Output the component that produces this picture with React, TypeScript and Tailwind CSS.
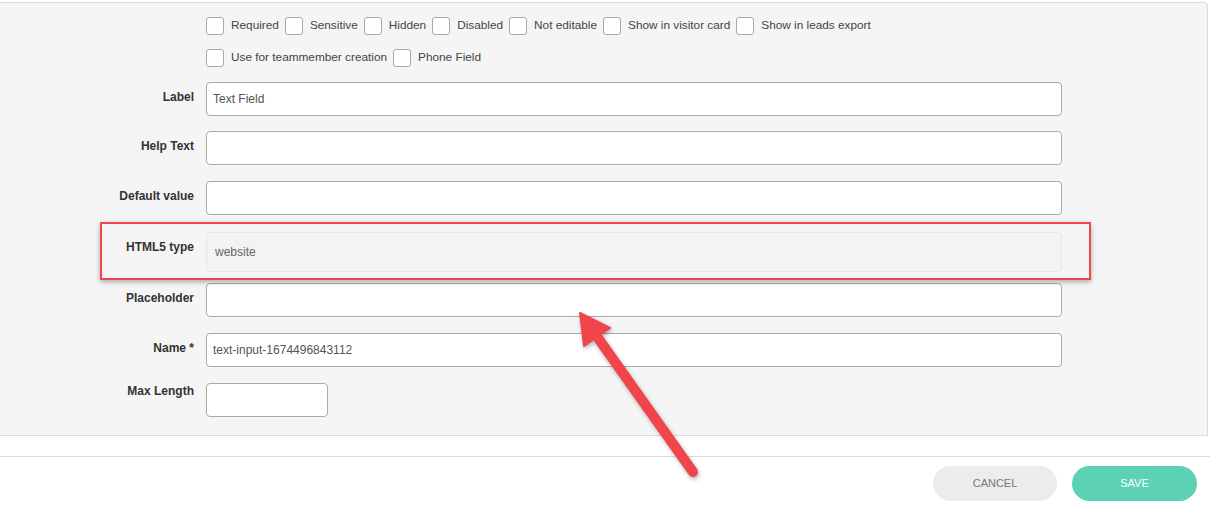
import React from 'react';

const checks1 = ['Required', 'Sensitive', 'Hidden', 'Disabled', 'Not editable', 'Show in visitor card', 'Show in leads export'];
const checks2 = ['Use for teammember creation', 'Phone Field'];

const CheckRow = ({ items }: { items: string[] }) => (
    <div className="flex items-center h-[18px] pl-[206px]">
        {items.map((t, i) => (
            <label key={t} className={`flex items-center ${i > 0 ? 'ml-[6px]' : ''}`}>
                <span className="w-[18px] h-[18px] bg-white border border-[#a9a9a9] rounded-[3px] shrink-0" />
                <span className="ml-[7px] text-[11.8px] text-[#444] leading-[16px] -mt-[2px]">{t}</span>
            </label>
        ))}
    </div>
);

const Row = ({ label, value, className, inputClass, labelClass }: { label: string; value?: string; className?: string; inputClass?: string; labelClass?: string }) => (
    <div className={`flex ${className ?? ''}`}>
        <div className={`w-[194px] text-right text-[12px] font-bold leading-[16px] text-[#333] ${labelClass ?? 'pt-[7px]'}`}>{label}</div>
        <div
            className={`ml-[12px] h-[34px] bg-white border border-[#aaa] rounded-[4px] flex items-center px-[6px] text-[12px] text-[#555] ${inputClass ?? 'w-[856px]'}`}
        >
            {value}
        </div>
    </div>
);

const App = () => {
    return (
        <div className="relative w-[1210px] h-[512px] bg-white font-['Liberation_Sans',Arial,sans-serif] overflow-hidden">
            <div className="mt-[2px] mr-[2px] h-[434px] bg-[#f5f5f5] border-t border-r border-b border-[#dcdcdc] rounded-tr-[4px] pt-[14px]">
                <CheckRow items={checks1} />
                <div className="h-[14px]" />
                <CheckRow items={checks2} />
                <div className="mt-[15px]">
                    <Row label="Label" value="Text Field" className="mb-[15px]" />
                    <Row label="Help Text" className="mb-[16px]" />
                    <Row label="Default value" className="mb-[17px]" />
                    <div className="flex mb-[11px]">
                        <div className="w-[194px] text-right pt-[7px] text-[12px] font-bold leading-[16px] text-[#333]">HTML5 type</div>
                        <div className="ml-[12px] w-[856px] h-[40px] bg-[#f3f3f3] border border-[#e6e6e6] rounded-[4px] flex items-center px-[8px] text-[12px] text-[#666]">
                            website
                        </div>
                    </div>
                    <Row label="Placeholder" className="mb-[16px]" />
                    <Row label="Name *" value="text-input-1674496843112" className="mb-[16px]" />
                    <Row label="Max Length" inputClass="w-[122px]" labelClass="pt-0" />
                </div>
            </div>
            <div className="mt-[20px] border-t border-[#dcdcdc]" />
            <div className="flex justify-end gap-[15px] pr-[13px] pt-[9px]">
                <button className="w-[124px] h-[35px] rounded-full bg-[#ececec] text-[#777] text-[11px]">CANCEL</button>
                <button className="w-[125px] h-[35px] rounded-full bg-[#5dd1b4] text-white text-[11px]">SAVE</button>
            </div>

            {/* annotation overlay */}
            <div className="absolute left-[100px] top-[222px] w-[991px] h-[58px] border-2 border-[#f0454a] shadow-[0_2px_5px_rgba(0,0,0,0.3)] pointer-events-none" />
            <svg className="absolute left-0 top-0 pointer-events-none" width="1210" height="512" style={{ filter: 'drop-shadow(1px 2px 2px rgba(0,0,0,0.3))' }}>
                <line x1="693" y1="472" x2="598" y2="338" stroke="#f0454a" strokeWidth="10" strokeLinecap="round" />
                <polygon points="580,313 610,328 584,346" fill="#f0454a" stroke="#f0454a" strokeWidth="2" strokeLinejoin="round" />
            </svg>
        </div>
    );
};

export default App;
